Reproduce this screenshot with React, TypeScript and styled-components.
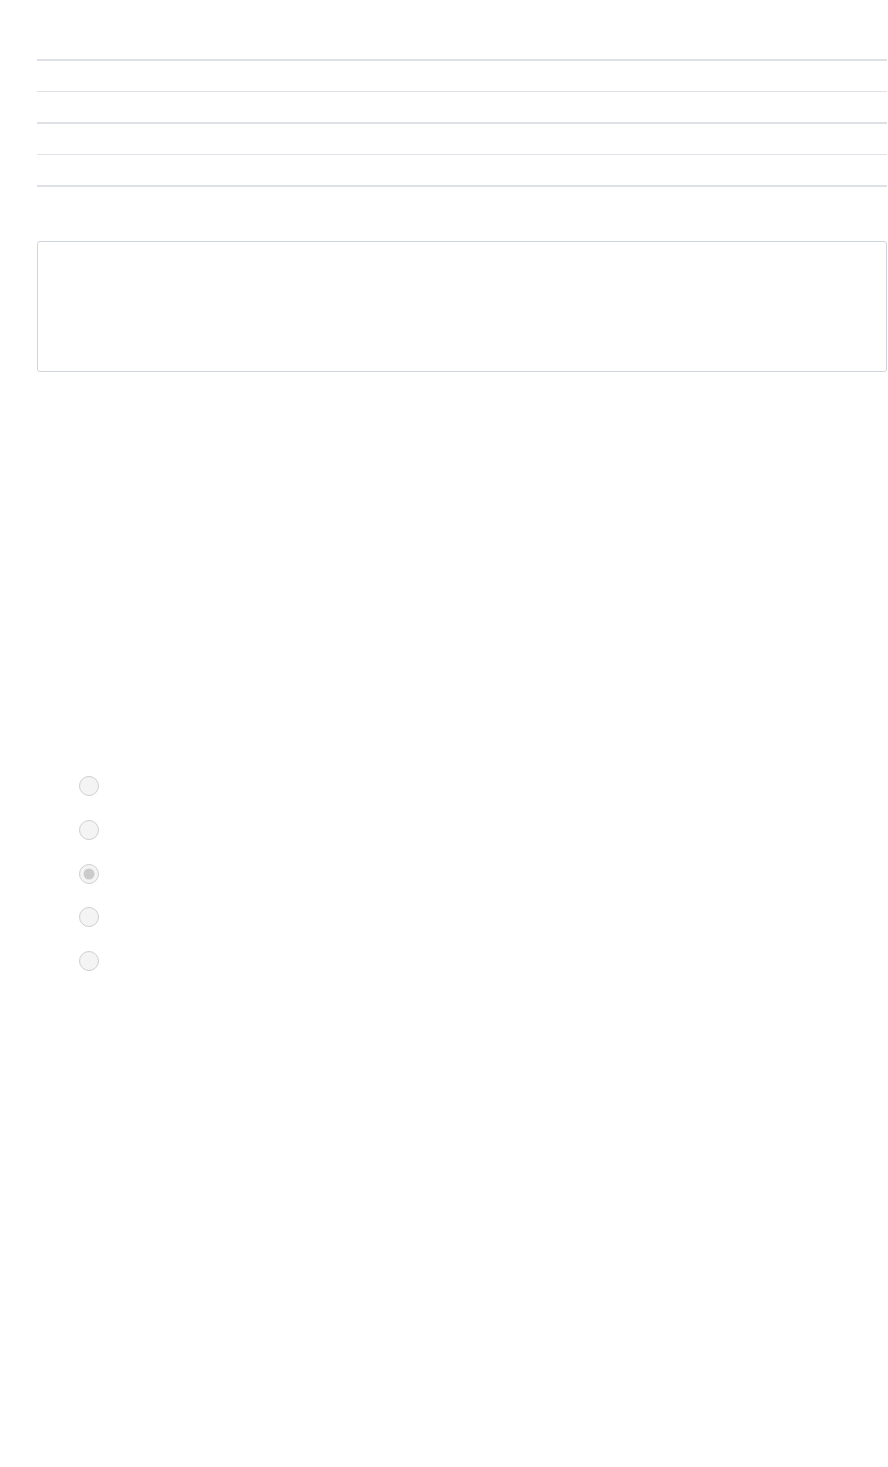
import { createGlobalStyle } from 'styled-components';
import styled from 'styled-components';

const GlobalStyle = createGlobalStyle`
  html, body {
    margin: 0;
    padding: 0;
    background: #ffffff;
    font-family: "Liberation Sans", Arial, sans-serif;
  }
`;

const Page = styled.div`
  padding: 59px 1px 0 37px;
  min-height: 1467px;
  box-sizing: border-box;
`;

const RuleList = styled.div`
  display: flex;
  flex-direction: column;
`;

const Rule = styled.div<{ $thick?: boolean }>`
  height: ${p => (p.$thick ? '2px' : '1px')};
  background: ${p => (p.$thick ? '#dde1e6' : '#e3e1e8')};
  margin-bottom: 30px;

  &:last-child {
    margin-bottom: 0;
  }
`;

const TextBox = styled.textarea`
  display: block;
  box-sizing: border-box;
  width: 100%;
  height: 131px;
  margin-top: 54px;
  border: 1px solid #d0d5dc;
  border-radius: 3px;
  resize: none;
  outline: none;
  background: #ffffff;
`;

const RadioList = styled.div`
  display: flex;
  flex-direction: column;
  gap: 23.75px;
  margin-top: 404px;
  padding-left: 42px;
`;

const Radio = styled.span<{ $checked?: boolean }>`
  position: relative;
  display: block;
  box-sizing: border-box;
  width: 20px;
  height: 20px;
  border-radius: 50%;
  border: 1.5px solid #cfcfcf;
  background: #f4f4f4;

  &::after {
    content: '';
    display: ${p => (p.$checked ? 'block' : 'none')};
    position: absolute;
    top: 50%;
    left: 50%;
    width: 11px;
    height: 11px;
    border-radius: 50%;
    background: #cbcbcb;
    transform: translate(-50%, -50%);
  }
`;

const rules = [true, false, true, false, true];
const radios = [false, false, true, false, false];

export default function App() {
  return (
    <>
      <GlobalStyle />
      <Page>
        <RuleList>
          {rules.map((thick, i) => (
            <Rule key={i} $thick={thick} />
          ))}
        </RuleList>
        <TextBox readOnly />
        <RadioList>
          {radios.map((checked, i) => (
            <Radio key={i} $checked={checked} />
          ))}
        </RadioList>
      </Page>
    </>
  );
}
